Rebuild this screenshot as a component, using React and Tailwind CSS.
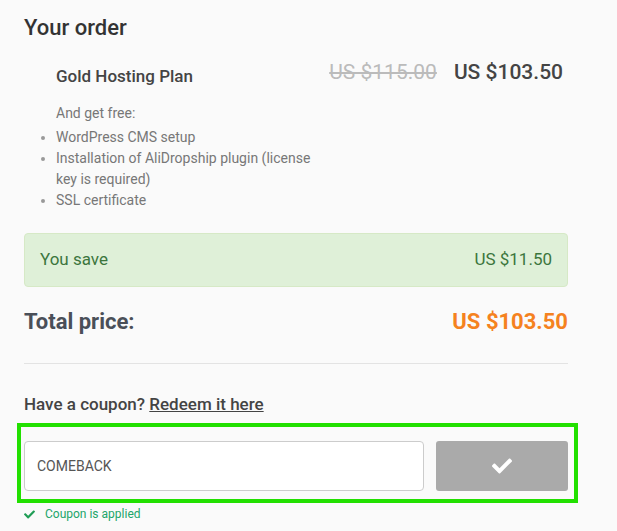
import React from "react";

function Check({ className }) {
  return (
    <svg viewBox="0 0 512 512" className={className} fill="currentColor">
      <path d="M173.9 439.4l-166.4-166.4c-10-10-10-26.2 0-36.2l36.2-36.2c10-10 26.2-10 36.2 0L192 312.7 432.1 72.6c10-10 26.2-10 36.2 0l36.2 36.2c10 10 10 26.2 0 36.2l-294.4 294.4c-10 10-26.2 10-36.2 0z" />
    </svg>
  );
}

export default function App() {
  return (
    <div className="w-[617px] h-[531px] bg-[#fafafa] font-['Roboto',sans-serif] px-[24px] overflow-hidden">
      <div className="w-[544px]">
        <h2 className="pt-[15px] text-[22px] leading-[26px] font-medium text-[#333]">Your order</h2>

        <div className="mt-[19px] flex justify-between items-start">
          <div className="pl-[32px] w-[300px]">
            <div className="mt-[5px] text-[17px] leading-[22px] font-medium text-[#444]">Gold Hosting Plan</div>
          </div>
          <div className="flex items-center gap-[17px] pr-[5px] text-[21px] leading-[24px]">
            <span className="text-[#bbb] line-through">US $115.00</span>
            <span className="font-medium text-[#444]">US $103.50</span>
          </div>
        </div>

        <div className="mt-[16px] pl-[32px] text-[14px] leading-[21px] text-[#777]">And get free:</div>
        <ul className="mt-[3px] pl-[32px] w-[298px] list-disc text-[14px] leading-[21px] text-[#777] marker:text-[#999]">
          <li>WordPress CMS setup</li>
          <li>Installation of AliDropship plugin (license key is required)</li>
          <li>SSL certificate</li>
        </ul>

        <div className="mt-[22px] h-[54px] flex items-center justify-between px-[15px] bg-[#dff0d8] border border-[#d6e9c6] rounded-[4px] text-[17px] text-[#3c763d]">
          <span>You save</span>
          <span>US $11.50</span>
        </div>

        <div className="mt-[21px] flex justify-between items-center text-[22px] leading-[28px] font-bold">
          <span className="text-[#4a4f58]">Total price:</span>
          <span className="text-[#f5821f]">US $103.50</span>
        </div>

        <div className="mt-[27px] border-t border-[#e3e3e3]" />

        <div className="mt-[29px] text-[17px] leading-[22px] font-medium text-[#444]">
          Have a coupon? <a className="underline text-[#444]">Redeem it here</a>
        </div>
      </div>

      <div className="-ml-[7px] mt-[8px] w-[561px] h-[80px] border-[4px] border-[#22e000] px-[3px] pt-[14px] pb-[8px] flex items-start gap-[12px]">
        <div className="w-[400px] h-[50px] bg-white border border-[#ccc] rounded-[4px] flex items-center pl-[12px] text-[14px] text-[#555]">
          COMEBACK
        </div>
        <button className="w-[132px] h-[50px] bg-[#aaaaaa] rounded-[3px] flex items-center justify-center text-white">
          <Check className="w-[20px] h-[20px]" />
        </button>
      </div>

      <div className="mt-[3px] flex items-center gap-[10px] text-[12px] leading-[16px] text-[#22a56a]">
        <Check className="w-[11px] h-[11px] text-[#1f9d55]" />
        <span>Coupon is applied</span>
      </div>
    </div>
  );
}
